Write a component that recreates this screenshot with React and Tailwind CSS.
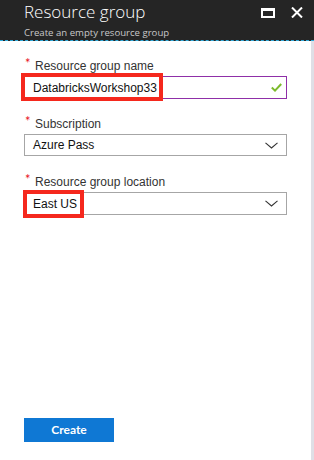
import React from "react";

const body = { fontFamily: '"Liberation Sans", Arial, sans-serif' };
const open = { fontFamily: '"Open Sans", "Noto Sans", sans-serif' };
const lato = { fontFamily: 'Lato, "Open Sans", sans-serif' };

function Field({ label, children }) {
  return (
    <div className="flex flex-col">
      <div className="flex h-[16px] items-center text-[12px] leading-[16px] text-[#333]" style={body}>
        <span className="relative top-[-3px] w-[11px] pl-[1px] text-[13px] text-[#e81123]" style={lato}>*</span>
        <span>{label}</span>
      </div>
      {children}
    </div>
  );
}

function Chevron() {
  return (
    <svg width="13" height="7" viewBox="0 0 13 7" className="mr-[8px]">
      <path d="M0.5 0.8 L6.5 6 L12.5 0.8" fill="none" stroke="#333" strokeWidth="1.1" />
    </svg>
  );
}

export default function App() {
  return (
    <div className="flex h-[460px] w-[314px] flex-col overflow-hidden bg-white" style={body}>
      <div className="flex h-[41px] shrink-0 items-start justify-between border-b border-dashed border-[#2fa9d9] bg-[#252525]">
        <div className="flex flex-col pl-[24px]" style={open}>
          <div className="pt-[1px] text-[17px] font-light leading-[22px] text-white">Resource group</div>
          <div className="mt-[4px] text-[9.6px] leading-[12px] text-[#c8c8c8]">Create an empty resource group</div>
        </div>
        <div className="flex items-center gap-[16px] pr-[11px] pt-[7px]">
          <div className="h-[10px] w-[14px] border-[2px] border-t-[3px] border-white" />
          <svg width="12" height="11" viewBox="0 0 12 11">
            <path d="M1 0.5 L11 10.5 M11 0.5 L1 10.5" stroke="#fff" strokeWidth="2" />
          </svg>
        </div>
      </div>
      <div className="flex flex-1">
        <div className="flex flex-1 flex-col px-[24px] pb-[18px]">
          <div className="mt-[17px]">
            <Field label="Resource group name">
              <div className="relative mt-[2px] flex h-[23px] items-center justify-between border border-[#8f2fa8] pl-[8px] pr-[4px] text-[12px] text-[#111]">
                <span>DatabricksWorkshop33</span>
                <svg width="11" height="9" viewBox="0 0 11 9">
                  <path d="M0.8 4.5 L4 7.6 L10.2 1" fill="none" stroke="#7cba2c" strokeWidth="2" />
                </svg>
                <div className="pointer-events-none absolute left-[-4px] top-[-4px] h-[28px] w-[142px] border-[4px] border-[#f5281d]" />
              </div>
            </Field>
          </div>
          <div className="mt-[17px]">
            <Field label="Subscription">
              <div className="mt-[2px] flex h-[22px] items-center justify-between border border-[#a6a6a6] pl-[8px] text-[12px] text-[#111]">
                <span>Azure Pass</span>
                <Chevron />
              </div>
            </Field>
          </div>
          <div className="mt-[18px]">
            <Field label="Resource group location">
              <div className="relative mt-[2px] flex h-[23px] items-center justify-between border border-[#a6a6a6] pl-[8px] text-[12px] text-[#111]">
                <span>East US</span>
                <Chevron />
                <div className="pointer-events-none absolute left-[-2px] top-[-3px] h-[28px] w-[61px] border-[4px] border-[#f5281d]" />
              </div>
            </Field>
          </div>
          <div className="flex-1" />
          <button
            className="flex h-[24px] w-[90px] items-center justify-center bg-[#0f78d4] text-[12px] font-bold text-white"
            style={lato}
          >
            Create
          </button>
        </div>
        <div className="w-[3px] bg-[#dfdfe6]" />
      </div>
    </div>
  );
}
